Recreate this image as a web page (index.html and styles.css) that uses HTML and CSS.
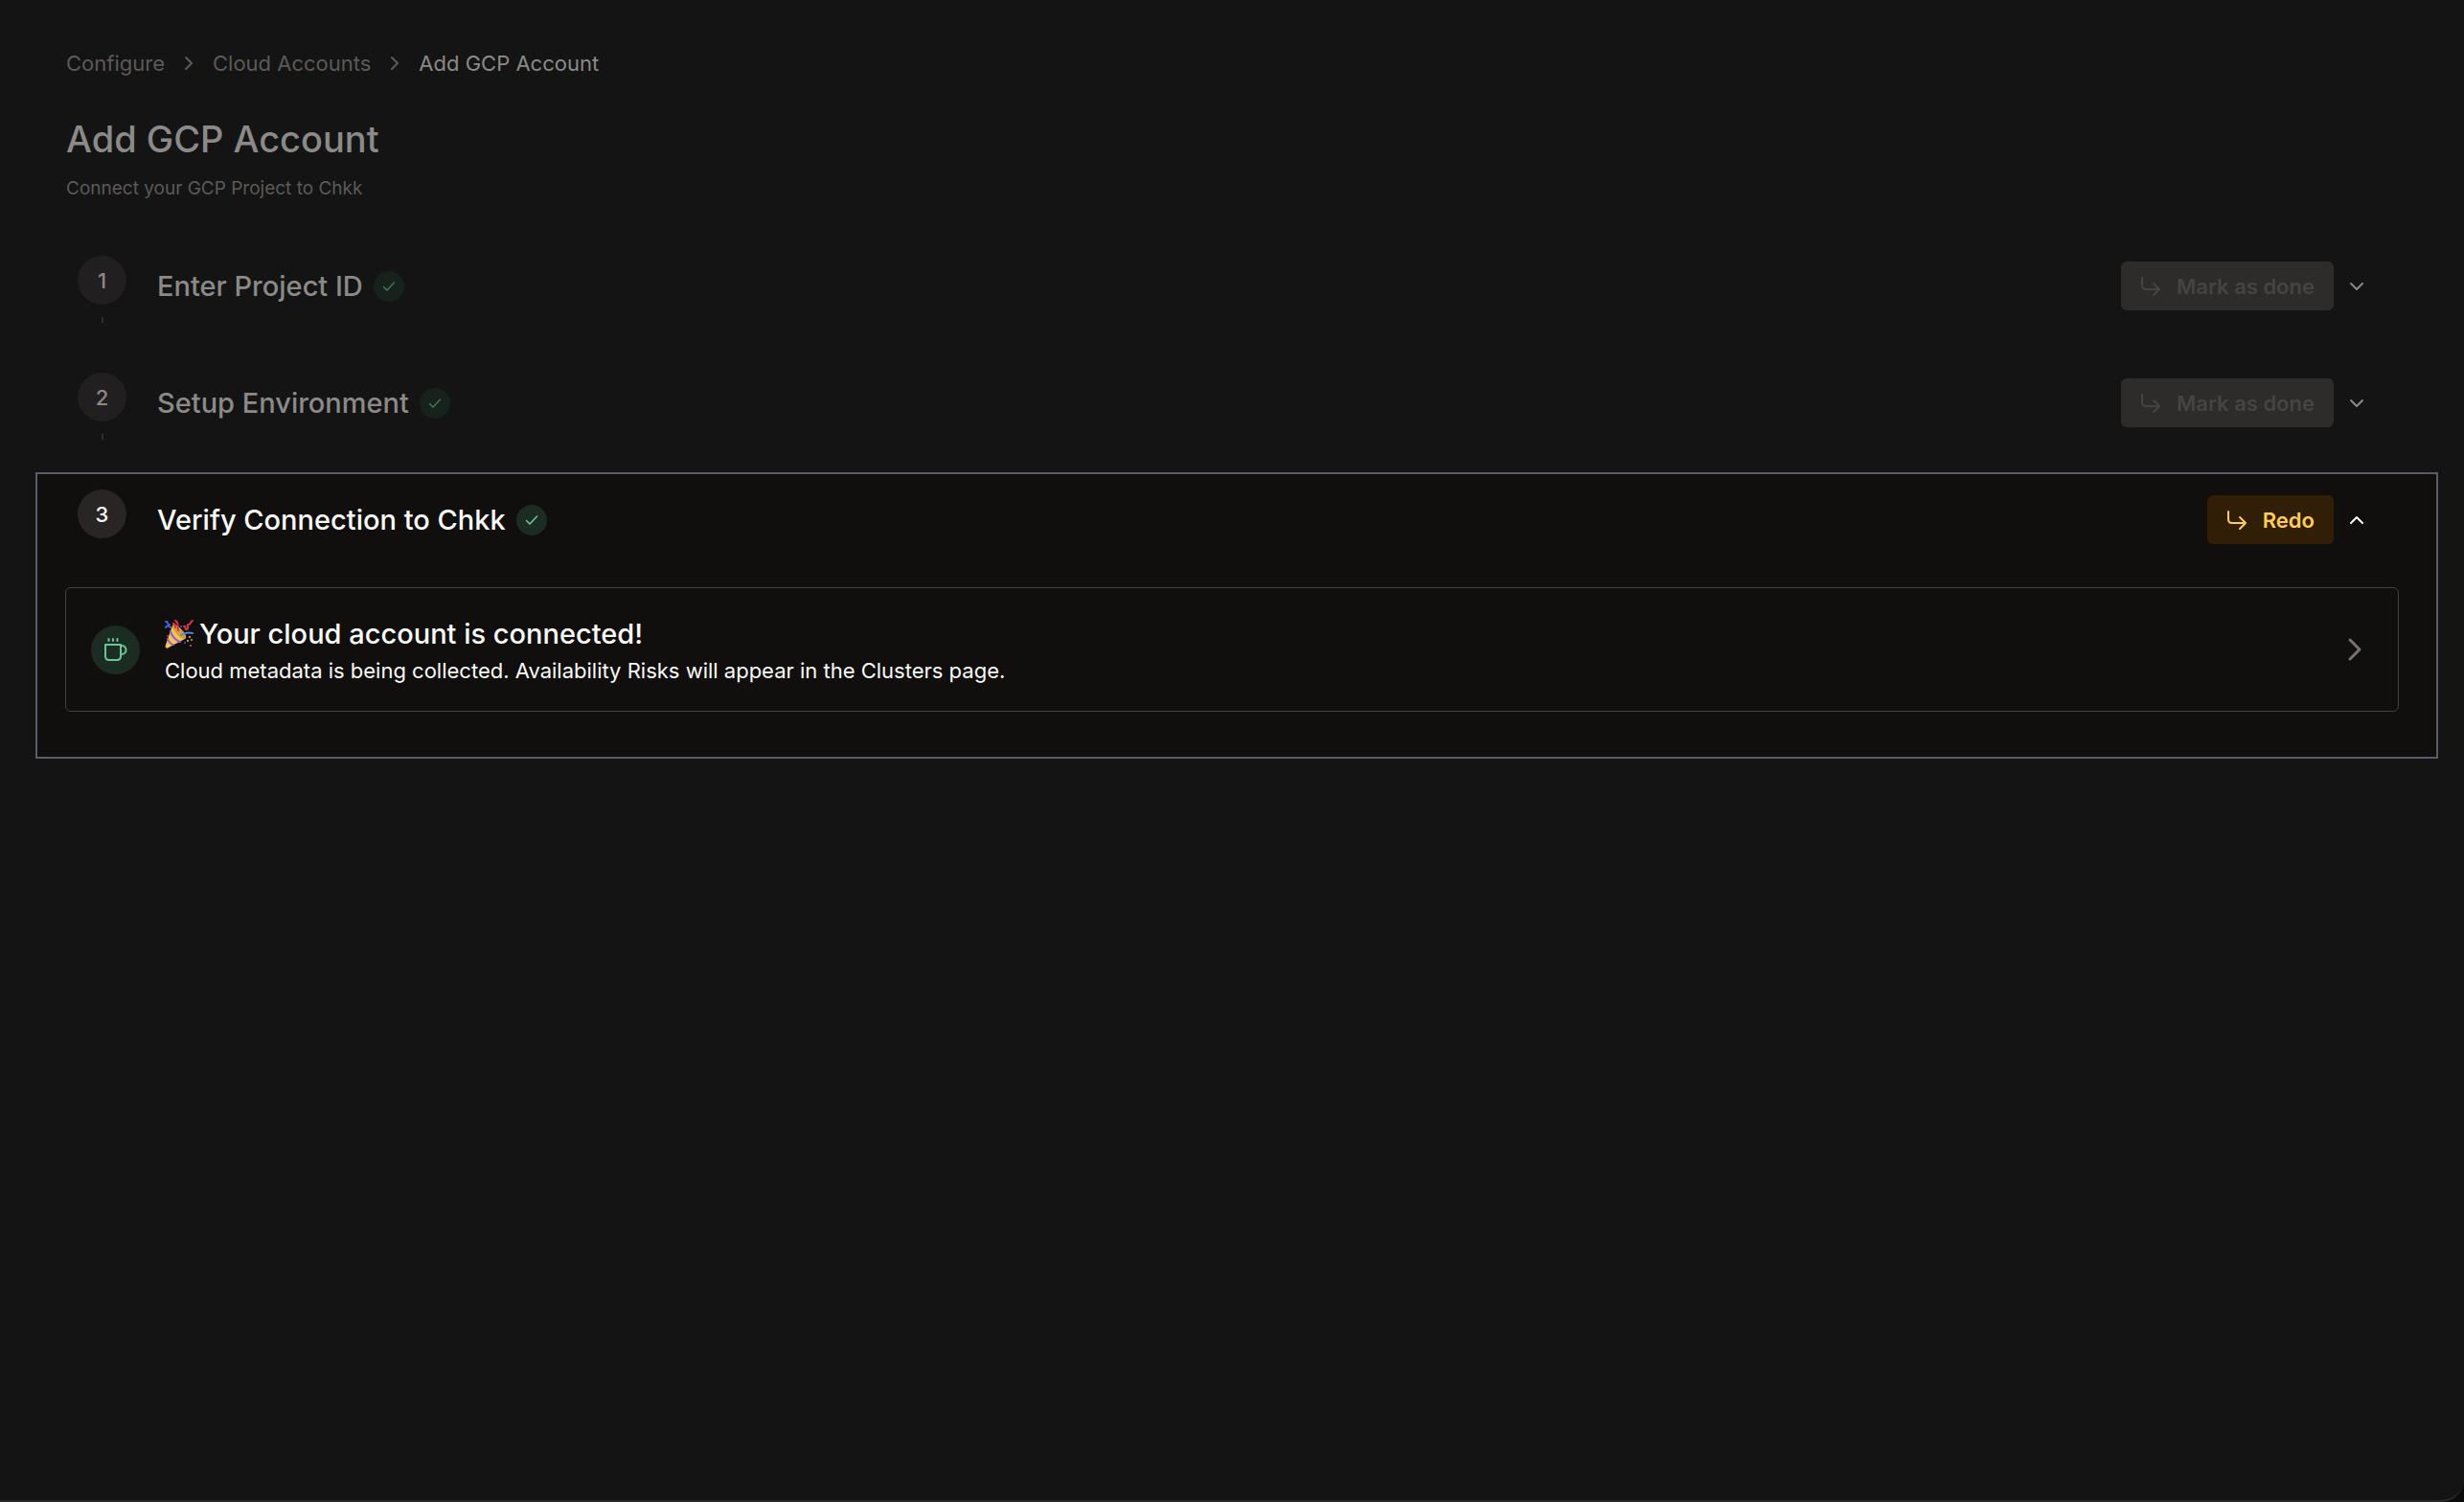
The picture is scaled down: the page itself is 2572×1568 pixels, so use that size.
FILE: index.html
```
<!DOCTYPE html>
<html lang="en">
<head>
    <meta charset="UTF-8">
    <meta name="viewport" content="width=device-width, initial-scale=1.0">
    <title>Add GCP Account</title>
    <link rel="stylesheet" href="styles.css">
</head>
<body>
    <!-- Shared icons -->
    <svg class="icon-defs" aria-hidden="true">
        <symbol id="chevron-right" viewBox="0 0 10 16"><path d="M2 2l6 6-6 6"/></symbol>
        <symbol id="chevron-down" viewBox="0 0 16 10"><path d="M2 2l6 6 6-6"/></symbol>
        <symbol id="chevron-up" viewBox="0 0 16 10"><path d="M2 8l6-6 6 6"/></symbol>
        <symbol id="check" viewBox="0 0 14 12"><path d="M1.5 6.500l3.500 3.500 7.500-8" stroke-width="1.600"/></symbol>
        <symbol id="arrow" viewBox="0 0 22 22"><path d="M2 2v8c0 3 1 4 4 4h14M14 8l6 6-6 6"/></symbol>
    </svg>

    <main class="page">
        <header class="page-header">
            <nav class="breadcrumb" aria-label="Breadcrumb">
                <a href="#">Configure</a>
                <svg class="crumb-icon"><use href="#chevron-right"/></svg>
                <a href="#">Cloud Accounts</a>
                <svg class="crumb-icon"><use href="#chevron-right"/></svg>
                <a href="#" class="current" aria-current="page">Add GCP Account</a>
            </nav>
            <h1>Add GCP Account</h1>
            <p class="subtitle">Connect your GCP Project to Chkk</p>
        </header>

        <section class="step">
            <div class="step-header">
                <div class="step-marker">
                    <span class="step-number">1</span>
                    <span class="step-line"></span>
                </div>
                <h2>Enter Project ID</h2>
                <span class="badge"><svg class="check-icon"><use href="#check"/></svg></span>
                <button class="button" disabled><svg class="arrow-icon"><use href="#arrow"/></svg>Mark as done</button>
                <button class="toggle" aria-label="Expand Enter Project ID"><svg class="toggle-icon"><use href="#chevron-down"/></svg></button>
            </div>
        </section>

        <section class="step">
            <div class="step-header">
                <div class="step-marker">
                    <span class="step-number">2</span>
                    <span class="step-line"></span>
                </div>
                <h2>Setup Environment</h2>
                <span class="badge"><svg class="check-icon"><use href="#check"/></svg></span>
                <button class="button" disabled><svg class="arrow-icon"><use href="#arrow"/></svg>Mark as done</button>
                <button class="toggle" aria-label="Expand Setup Environment"><svg class="toggle-icon"><use href="#chevron-down"/></svg></button>
            </div>
        </section>

        <section class="step active">
            <div class="step-header">
                <div class="step-marker">
                    <span class="step-number">3</span>
                </div>
                <h2>Verify Connection to Chkk</h2>
                <span class="badge"><svg class="check-icon"><use href="#check"/></svg></span>
                <button class="button redo"><svg class="arrow-icon"><use href="#arrow"/></svg>Redo</button>
                <button class="toggle" aria-label="Collapse Verify Connection to Chkk"><svg class="toggle-icon"><use href="#chevron-up"/></svg></button>
            </div>
            <a href="#" class="card">
                <span class="card-icon">
                    <svg class="cup-icon" viewBox="0 0 24 26">
                        <path d="M1 8h16v12c0 3-1 4-4 4H5c-3 0-4-1-4-4z"/>
                        <path d="M17 9h1c6 0 6 9 0 9h-1"/>
                        <path d="M4.500 2v2M9 2v2M13.500 2v2"/>
                    </svg>
                </span>
                <span class="card-text">
                    <span class="card-title">
                        <svg class="party-icon" viewBox="0 0 30 30" role="img" aria-label="Party popper">
                            <g stroke="none">
                                <path d="M1 29c-1-1 0-2 0-3L8 6c1-2 6 0 10 5 4 4 5 8 3 9L4 29c-1 1-2 1-3 0z" fill="#f0c552"/>
                                <path d="M8 6c1-2 6 0 10 5 4 4 5 8 3 9-2 0-6-2-9-6-3-3-4-6-4-8z" fill="#d79c35"/>
                            </g>
                            <path d="M6 12c1 5 6 10 10 11M3 20c1 3 4 6 6 6" stroke="#9a55d8"/>
                            <path d="M1 2c3-1 1 4 4 3M1 8c1-2 3-2 5 0" stroke="#3d63d8"/>
                            <path d="M11 1c4 1 2 5 3 10M9 4c2 0 2 2 2 4M20 7c3-1 0 4 3 3s-1-5 2-5 1-3 4-4" stroke="#d8344f"/>
                            <path d="M17 16c3-2 7-3 12-2" stroke="#4c8be0"/>
                            <g stroke="none">
                                <circle cx="17" cy="7" r="1" fill="#3d63d8"/>
                                <circle cx="3" cy="17" r="1" fill="#d8344f"/>
                                <circle cx="26" cy="18" r="1" fill="#f3c64b"/>
                                <circle cx="24" cy="22" r="1" fill="#f3c64b"/>
                                <circle cx="28" cy="21" r="1" fill="#d9992f"/>
                                <circle cx="27" cy="27" r="1" fill="#e0568c"/>
                                <circle cx="21" cy="24" r="1" fill="#3d63d8"/>
                            </g>
                        </svg>
                        Your cloud account is connected!
                    </span>
                    <span class="card-description">Cloud metadata is being collected. Availability Risks will appear in the Clusters page.</span>
                </span>
                <svg class="card-chevron" viewBox="0 0 16 26"><path d="M3 3l10 10L3 23"/></svg>
            </a>
        </section>
    </main>
</body>
</html>
```
FILE: styles.css
```
* {
    box-sizing: border-box;
}

body {
    margin: 0;
    background-color: #0b0b0b;
    font-family: Inter, sans-serif;
    color: #8b8a88;
}

h1, h2, p {
    margin: 0;
    font-weight: 500;
}

a {
    color: inherit;
    text-decoration: none;
}

svg {
    display: block;
    flex-shrink: 0;
    fill: none;
    stroke: currentColor;
    stroke-width: 2;
    stroke-linecap: round;
    stroke-linejoin: round;
}

.icon-defs {
    position: absolute;
    width: 0;
    height: 0;
}

.page {
    min-height: 100vh;
    padding: 50px 27px 0 37px;
    background-color: #141414;
    border-bottom: 2px solid #2b2a2b;
    border-bottom-right-radius: 24px;
}

.page-header {
    padding: 0 32px;
    margin-bottom: 40px;
}

.breadcrumb {
    display: flex;
    align-items: center;
    gap: 20px;
    font-size: 22px;
    line-height: 32px;
    color: #5c5a58;
}

.breadcrumb .current {
    color: #8b8a88;
}

.crumb-icon {
    width: 10px;
    height: 16px;
}

h1 {
    margin-top: 39px;
    font-size: 38px;
    line-height: 48px;
}

.subtitle {
    margin-top: 16px;
    font-size: 19px;
    font-weight: 400;
    line-height: 24px;
    color: #5c5a58;
}

.step {
    padding: 16px 39px 39px 29px;
    border: 2px solid transparent;
}

.step-header {
    display: flex;
    align-items: center;
    height: 63px;
    padding: 0 20px 0 13px;
}

.step-marker {
    display: flex;
    flex-direction: column;
    align-items: center;
    align-self: flex-start;
    gap: 13px;
    margin-right: 32px;
}

.step-number {
    display: flex;
    align-items: center;
    justify-content: center;
    width: 51px;
    height: 51px;
    border-radius: 50%;
    background-color: #211f20;
    font-size: 22px;
    font-weight: 500;
}

.step-line {
    width: 2px;
    height: 6px;
    background-color: #2f2e2e;
}

h2 {
    font-size: 29px;
    line-height: 40px;
}

.badge {
    display: flex;
    align-items: center;
    justify-content: center;
    width: 32px;
    height: 32px;
    margin: 0 auto 0 11px;
    border-radius: 50%;
    background-color: #18221d;
    color: #3f7355;
}

.check-icon {
    width: 14px;
    height: 12px;
}

.button {
    display: flex;
    align-items: center;
    gap: 16px;
    height: 51px;
    padding: 0 20px;
    border: none;
    border-radius: 6px;
    background-color: #2d2c2a;
    color: #454442;
    font-family: inherit;
    font-size: 22px;
    font-weight: 600;
}

.arrow-icon {
    width: 22px;
    height: 22px;
}

.toggle {
    padding: 12px 16px;
    border: none;
    background: none;
    color: #8b8a88;
}

.toggle-icon {
    width: 16px;
    height: 10px;
}

/* Current step */
.active {
    padding-bottom: 47px;
    background-color: #100f0d;
    border-color: #595b66;
    color: #fafaf9;
}

.active .step-number {
    background-color: #292524;
}

.active .badge,
.card-icon {
    background-color: #1b2d23;
    color: #6bc495;
}

.redo {
    background-color: #311e06;
    color: #ffcd57;
}

.active .toggle {
    color: #fafaf9;
}

.card {
    display: flex;
    align-items: center;
    gap: 26px;
    height: 130px;
    margin-top: 39px;
    padding: 0 37px 0 26px;
    border: 1px solid #44403c;
    border-radius: 6px;
}

.card-icon {
    display: flex;
    align-items: center;
    justify-content: center;
    width: 51px;
    height: 51px;
    border-radius: 50%;
}

.cup-icon {
    width: 24px;
    height: 26px;
}

.card-text {
    display: flex;
    flex: 1;
    flex-direction: column;
    padding-top: 4px;
}

.card-title {
    display: flex;
    align-items: center;
    gap: 6px;
    font-size: 29px;
    font-weight: 500;
    line-height: 40px;
}

.party-icon {
    width: 30px;
    height: 30px;
}

.card-description {
    font-size: 22px;
    line-height: 36px;
}

.card-chevron {
    width: 16px;
    height: 26px;
    color: #78716c;
    stroke-width: 3;
}
```
